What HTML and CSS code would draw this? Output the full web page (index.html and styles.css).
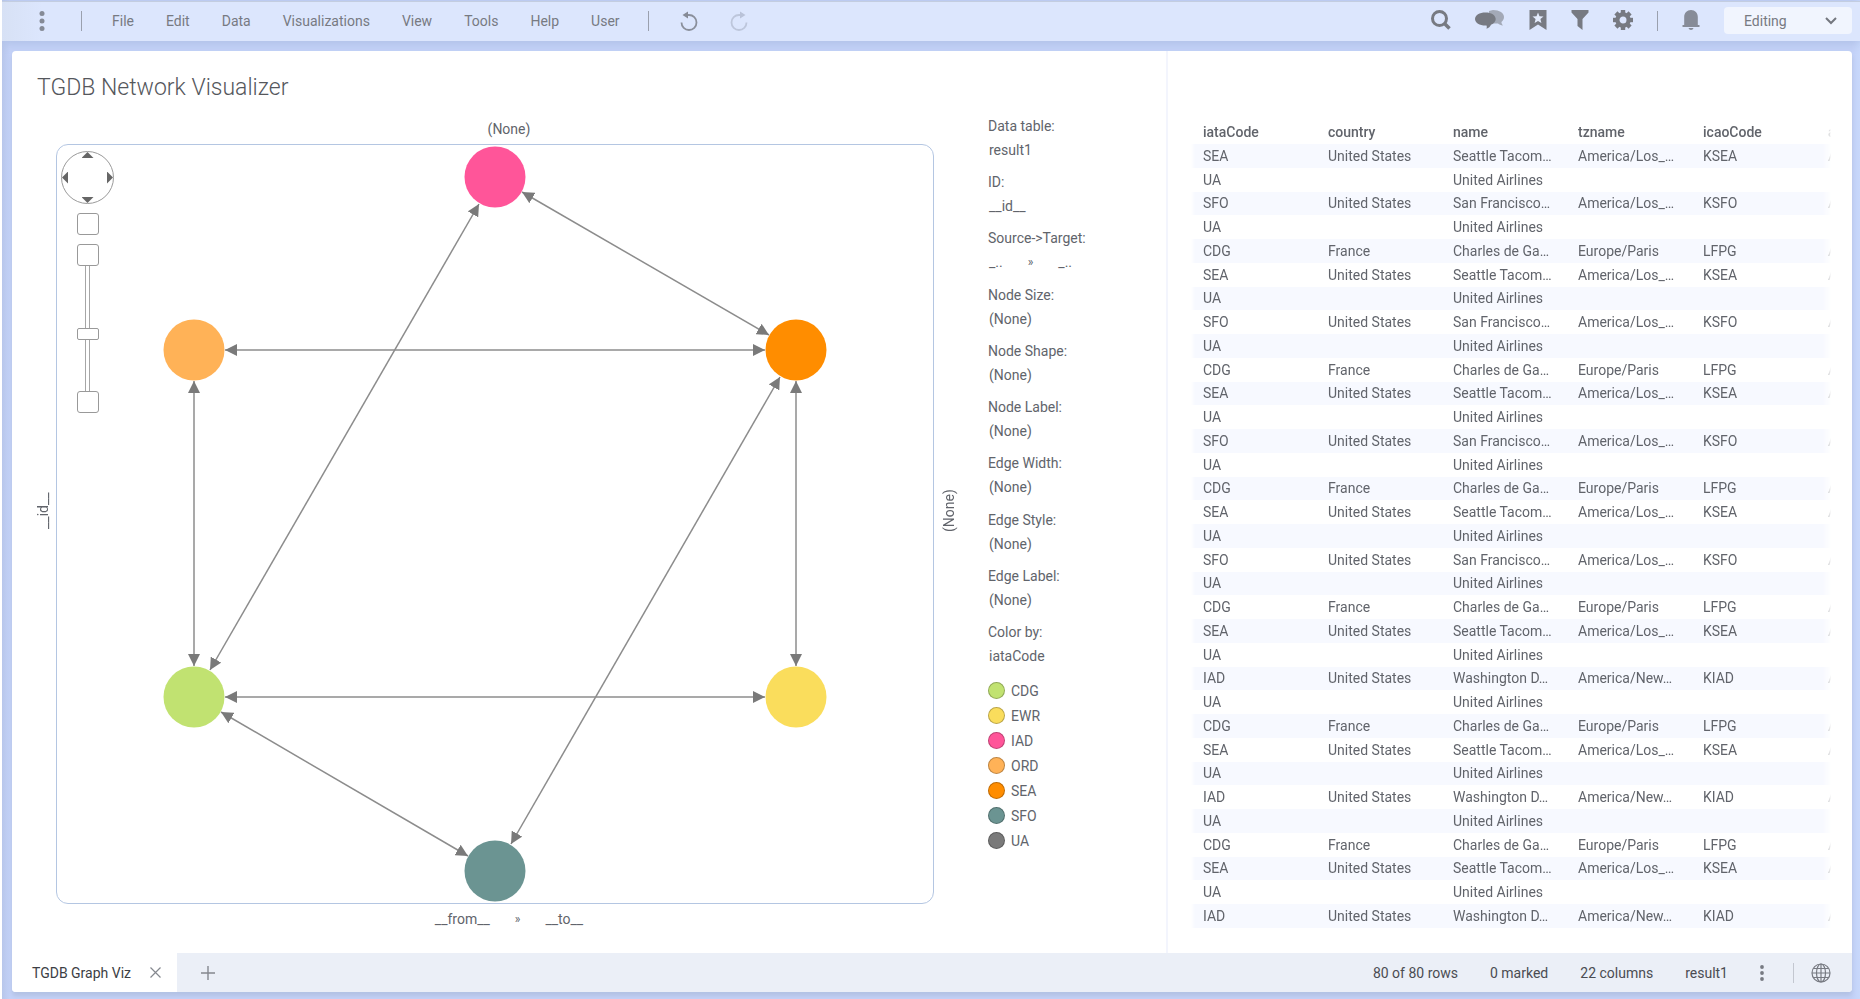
FILE: index.html
```
<!DOCTYPE html>
<html lang="en">
<head>
  <meta charset="UTF-8" />
  <meta name="viewport" content="width=device-width, initial-scale=1.0"/>
  <title>TGDB Network Visualizer</title>
  <link rel="stylesheet" href="styles.css">
</head>
<body>
  <header class="toolbar">
    <button class="icon-btn more" aria-label="More">
      <svg width="6" height="20" viewBox="0 0 6 20"><circle cx="3" cy="2.5" r="2.5"/><circle cx="3" cy="10" r="2.5"/><circle cx="3" cy="17.5" r="2.5"/></svg>
    </button>
    <span class="divider"></span>
    <nav class="menu">
      <button>File</button>
      <button>Edit</button>
      <button>Data</button>
      <button>Visualizations</button>
      <button>View</button>
      <button>Tools</button>
      <button>Help</button>
      <button>User</button>
    </nav>
    <span class="divider"></span>
    <div class="history">
      <button class="icon-btn" aria-label="Undo">
        <svg width="18" height="20" viewBox="0 0 18 20"><path d="M1.5 11.5a7.500 7.500 0 1 0 7.500-7.500H7" fill="none" stroke="#8a8f9b" stroke-width="1.8"/><path d="M2.500 4 8 .5v7z" fill="#858a96"/></svg>
      </button>
      <button class="icon-btn" aria-label="Redo" disabled>
        <svg width="18" height="20" viewBox="0 0 18 20"><path d="M16.500 11.500a7.500 7.500 0 1 1-7.500-7.500h2" fill="none" stroke="#bdc6db" stroke-width="1.8"/><path d="M15.500 4 10 .5v7z" fill="#b9c2d8"/></svg>
      </button>
    </div>

    <div class="actions">
      <button class="icon-btn" aria-label="Search">
        <svg width="20" height="20" viewBox="0 0 20 20"><circle cx="8.5" cy="8.5" r="7" fill="none" stroke="#777a82" stroke-width="3"/><path d="M13.5 13.5l5 5" stroke="#777a82" stroke-width="3.6"/></svg>
      </button>
      <button class="icon-btn" aria-label="Collaboration">
        <svg width="30" height="20" viewBox="0 0 30 20"><path d="M18 0c6.500 0 11 3 11 7 0 2-1 3.800-2.600 5 .2 1.800.8 2.600 1.600 3.400-2.200-.1-3.800-.8-5-1.900H14V1z" fill="#a3a9b7"/><path d="M10.500 2.500C4.500 2.500 0 5.200 0 9s4.500 6.500 10.500 6.500h1c.4 1.200.4 2 0 3.200 2.300-.7 3.700-2 4.500-4 3-1.200 4.700-3.200 4.700-5.700 0-3.800-4.400-6.500-10.200-6.500z" fill="#777a82"/></svg>
      </button>
      <button class="icon-btn" aria-label="Bookmarks">
        <svg width="18" height="20" viewBox="0 0 18 20"><path d="M.5 0h17v20L9 14.5.5 20z" fill="#777a82"/><path d="m9 2.500 1.500 3.800 4 .2-3.100 2.600 1 3.900L9 10.900 5.600 13l1-3.900-3.100-2.600 4-.2z" fill="#e4ecfd"/></svg>
      </button>
      <button class="icon-btn" aria-label="Filters">
        <svg width="18" height="20" viewBox="0 0 18 20"><path d="M.5 0h17v2.5L11.5 9v11L6.500 16V9L.5 2.500z" fill="#777a82"/></svg>
      </button>
      <button class="icon-btn" aria-label="Settings">
        <svg width="20" height="20" viewBox="0 0 20 20"><g id="teeth" fill="#777a82"><rect x="7.8" y="0" width="4.4" height="5"/><rect x="7.8" y="15" width="4.4" height="5"/><rect x="0" y="7.8" width="5" height="4.4"/><rect x="15" y="7.8" width="5" height="4.4"/></g><use href="#teeth" transform="rotate(45 10 10)"/><circle cx="10" cy="10" r="5.600" fill="none" stroke="#777a82" stroke-width="4.2"/></svg>
      </button>
      <span class="divider"></span>
      <button class="icon-btn" aria-label="Notifications">
        <svg width="18" height="20" viewBox="0 0 18 20"><path d="M9 0c4 0 6.800 3 6.800 7v8h1.700v2H.5v-2h1.700V7c0-4 2.800-7 6.800-7z" fill="#878c98"/><path d="M6.500 18h5c-.4 1.300-1.300 2-2.500 2s-2.100-.7-2.500-2z" fill="#878c98"/></svg>
      </button>
      <div class="mode">
        <select aria-label="Mode">
          <option>Editing</option>
        </select>
        <svg width="12" height="8" viewBox="0 0 12 8"><path d="M1 1l5 5 5-5" fill="none" stroke="#74777f" stroke-width="2"/></svg>
      </div>
    </div>
  </header>

  <main class="page">
    <div class="panels">
      <section class="network">
        <h1>TGDB Network Visualizer</h1>
        <div class="network-body">
          <div class="chart">
            <div class="axis axis-top">(None)</div>
            <div class="axis axis-left">__id__</div>
            <div class="plot">
              <svg class="graph" viewBox="0 0 876 758" role="img" aria-label="Airport network">
                <defs>
                  <marker id="arrow" viewBox="0 0 12 12" refX="12" refY="6" markerWidth="12" markerHeight="12" markerUnits="userSpaceOnUse" orient="auto-start-reverse">
                    <path d="M0 0 12 6 0 12z" fill="#7a7a7a"/>
                  </marker>
                </defs>
                <g class="edges">
                  <path d="M465 47 712 190"/>
                  <path d="M422 59 153 525"/>
                  <path d="M168 205H708"/>
                  <path d="M137 236V521"/>
                  <path d="M739 236V521"/>
                  <path d="M723 232 454 699"/>
                  <path d="M168 552H708"/>
                  <path d="M164 567 411 711"/>
                </g>
                <circle cx="438" cy="32" r="30.5" fill="#ff5599"/>
                <circle cx="137" cy="205" r="30.5" fill="#ffb257"/>
                <circle cx="739" cy="205" r="30.5" fill="#ff8d00"/>
                <circle cx="137" cy="552" r="30.5" fill="#c1e271"/>
                <circle cx="739" cy="552" r="30.5" fill="#fadd5c"/>
                <circle cx="438" cy="726" r="30.5" fill="#6b9492"/>
              </svg>
              <div class="navigator">
                <div class="pan">
                  <button class="up" aria-label="Pan up"></button>
                  <button class="left" aria-label="Pan left"></button>
                  <button class="right" aria-label="Pan right"></button>
                  <button class="down" aria-label="Pan down"></button>
                </div>
                <button class="box" aria-label="Fit to view"></button>
                <div class="zoom">
                  <button class="box" aria-label="Zoom in"></button>
                  <input type="range" min="0" max="100" value="55" aria-label="Zoom level">
                  <button class="box" aria-label="Zoom out"></button>
                </div>
              </div>
            </div>
            <div class="axis axis-right">(None)</div>
            <div class="axis axis-bottom"><span>__from__</span><small>»</small><span>__to__</span></div>
          </div>

          <aside class="legend">
            <dl>
              <div><dt>Data table:</dt><dd>result1</dd></div>
              <div><dt>ID:</dt><dd>__id__</dd></div>
              <div><dt>Source-&gt;Target:</dt><dd class="pair"><span>_..</span><small>»</small><span>_..</span></dd></div>
              <div><dt>Node Size:</dt><dd>(None)</dd></div>
              <div><dt>Node Shape:</dt><dd>(None)</dd></div>
              <div><dt>Node Label:</dt><dd>(None)</dd></div>
              <div><dt>Edge Width:</dt><dd>(None)</dd></div>
              <div><dt>Edge Style:</dt><dd>(None)</dd></div>
              <div><dt>Edge Label:</dt><dd>(None)</dd></div>
              <div><dt>Color by:</dt><dd>iataCode</dd></div>
            </dl>
            <ul>
              <li class="cdg">CDG</li>
              <li class="ewr">EWR</li>
              <li class="iad">IAD</li>
              <li class="ord">ORD</li>
              <li class="sea">SEA</li>
              <li class="sfo">SFO</li>
              <li class="ua">UA</li>
            </ul>
          </aside>
        </div>
      </section>

      <section class="data">
        <table>
          <thead>
            <tr><th>iataCode</th><th>country</th><th>name</th><th>tzname</th><th>icaoCode</th><th>a</th></tr>
          </thead>
          <tbody id="rows"></tbody>
        </table>
      </section>
    </div>

    <footer class="statusbar">
      <div class="tab">
        <a href="#">TGDB Graph Viz</a>
        <button class="icon-btn" aria-label="Close page">
          <svg width="11" height="11" viewBox="0 0 11 11"><path d="M.5.5l10 10M10.5.5l-10 10" stroke="#85888f" stroke-width="1.2"/></svg>
        </button>
      </div>
      <button class="icon-btn add" aria-label="New page">
        <svg width="14" height="14" viewBox="0 0 14 14"><path d="M7 0v14M0 7h14" stroke="#85888f" stroke-width="1.4"/></svg>
      </button>
      <div class="status">
        <span>80 of 80 rows</span>
        <span>0 marked</span>
        <span>22 columns</span>
        <span>result1</span>
        <button class="icon-btn" aria-label="Table options">
          <svg width="4" height="16" viewBox="0 0 4 16"><g fill="#777a82"><circle cx="2" cy="2" r="1.9"/><circle cx="2" cy="8" r="1.9"/><circle cx="2" cy="14" r="1.9"/></g></svg>
        </button>
        <span class="divider"></span>
        <button class="icon-btn" aria-label="Language">
          <svg width="20" height="20" viewBox="0 0 20 20"><g fill="none" stroke="#777a82" stroke-width="1.2"><circle cx="10" cy="10" r="9"/><ellipse cx="10" cy="10" rx="4.5" ry="9"/><path d="M10 1v18M1 10h18M2.500 5.500h15M2.500 14.500h15"/></g></svg>
        </button>
      </div>
    </footer>
  </main>

  <script>
    const airports = {
      SEA: ["SEA", "United States", "Seattle Tacom…", "America/Los_…", "KSEA", "A"],
      SFO: ["SFO", "United States", "San Francisco…", "America/Los_…", "KSFO", "A"],
      IAD: ["IAD", "United States", "Washington D…", "America/New…", "KIAD", "A"],
      CDG: ["CDG", "France", "Charles de Ga…", "Europe/Paris", "LFPG", "A"],
      UA: ["UA", "", "United Airlines", "", "", ""]
    };

    const viaSfo = ["SEA", "UA", "SFO", "UA", "CDG"];
    const viaIad = ["SEA", "UA", "IAD", "UA", "CDG"];
    const order = [
      ...viaSfo, ...viaSfo, ...viaSfo, ...viaSfo,
      ...viaIad, ...viaIad, ...viaIad.slice(0, 3)
    ];

    const tbody = document.getElementById("rows");
    order.forEach(code => {
      const row = tbody.insertRow();
      airports[code].forEach(value => {
        row.insertCell().textContent = value;
      });
    });
  </script>
</body>
</html>
```

FILE: styles.css
```
* {
  box-sizing: border-box;
}

body {
  margin: 0;
  min-height: 100vh;
  display: flex;
  flex-direction: column;
  padding-top: 1px;
  border-left: 2px solid #fff;
  background: linear-gradient(90deg, #b5c4e8, #c3d1f7 10px, #c3d1f7 calc(100% - 8px), #c8d8fb);
  font-family: Roboto, sans-serif;
  font-size: 14px;
  color: #61646b;
}

button {
  font: inherit;
  color: inherit;
  background: none;
  border: 0;
  padding: 0;
  cursor: pointer;
}

svg {
  display: block;
}

.toolbar {
  height: 40px;
  display: flex;
  align-items: center;
  padding: 0 8px 2px 37px;
  background: linear-gradient(90deg, #d7e1f5, #dce6fd 40px);
  border-top: 1px solid #c3cde0;
  box-shadow: 0 2px 10px #aebfe5;
  color: #777a82;
}

.more {
  fill: #858a96;
}

.divider {
  width: 1px;
  height: 20px;
  background: #9aa0ae;
}

.more + .divider {
  margin: 0 30px 0 36px;
}

.menu {
  display: flex;
  gap: 32px;
  margin-right: 28px;
}

.history {
  display: flex;
  gap: 32px;
  margin-left: 31px;
}

.actions {
  display: flex;
  align-items: center;
  gap: 24px;
  margin-left: auto;
}

.actions .icon-btn {
  padding-bottom: 2px;
}

.mode {
  position: relative;
}

.mode select {
  appearance: none;
  width: 128px;
  height: 27px;
  padding: 0 20px;
  border: 0;
  border-radius: 4px;
  background: #f1f5fe;
  font: inherit;
  color: inherit;
}

.mode svg {
  position: absolute;
  right: 15px;
  top: 10px;
  pointer-events: none;
}

.page {
  flex: 1;
  display: flex;
  flex-direction: column;
  margin: 10px 8px 7px 10px;
  border-radius: 4px;
  background: #fff;
  box-shadow: 0 4px 4px #b3c2e4;
  overflow: hidden;
}

.panels {
  flex: 1;
  display: flex;
}

.network {
  flex: 1;
  display: flex;
  flex-direction: column;
  padding: 22px 46px 20px 25px;
  border-right: 2px solid #f3f5fd;
}

h1 {
  margin: 0;
  font-size: 23px;
  font-weight: 300;
  line-height: 30px;
  color: #55575c;
}

.network-body {
  flex: 1;
  display: flex;
  gap: 31px;
  padding-top: 11px;
}

.chart {
  flex: 1;
  display: grid;
  grid-template:
    ". top ." 30px
    "left plot right" 1fr
    ". bottom ." 29px / 19px 1fr 23px;
}

.axis {
  display: flex;
  align-items: center;
  justify-content: center;
}

.axis-top,
.axis-bottom {
  padding-left: 28px;
}

.axis-top {
  grid-area: top;
}

.axis-bottom {
  grid-area: bottom;
  gap: 25px;
}

small {
  font-size: 12px;
}

.axis-left,
.axis-right {
  writing-mode: vertical-rl;
  transform: rotate(180deg);
  padding-top: 26px;
}

.axis-left {
  grid-area: left;
  justify-self: start;
  line-height: 12px;
}

.axis-right {
  grid-area: right;
  justify-self: end;
}

.plot {
  grid-area: plot;
  position: relative;
  border: 1px solid #b4c6e2;
  border-radius: 12px;
}

.graph {
  width: 100%;
  height: 100%;
}

.edges path {
  fill: none;
  stroke: #8c8c8c;
  stroke-width: 1.5;
  marker-start: url(#arrow);
  marker-end: url(#arrow);
}

.navigator {
  position: absolute;
  left: 4px;
  top: 6px;
  display: flex;
  flex-direction: column;
  align-items: center;
  gap: 9px;
}

.pan {
  display: grid;
  grid-template-columns: repeat(3, 1fr);
  grid-template-rows: repeat(3, 1fr);
  width: 53px;
  height: 53px;
  border: 1px solid #9a9a9a;
  border-radius: 50%;
}

.pan button {
  width: 12px;
  height: 6px;
  background: #666;
  clip-path: polygon(50% 0, 100% 100%, 0 100%);
}

.pan .up {
  grid-area: 1 / 2;
  justify-self: center;
}

.pan .down {
  grid-area: 3 / 2;
  place-self: end center;
  clip-path: polygon(0 0, 100% 0, 50% 100%);
}

.pan .left,
.pan .right {
  width: 6px;
  height: 12px;
  align-self: center;
}

.pan .left {
  grid-area: 2 / 1;
  clip-path: polygon(0 50%, 100% 0, 100% 100%);
}

.pan .right {
  grid-area: 2 / 3;
  justify-self: end;
  clip-path: polygon(0 0, 100% 50%, 0 100%);
}

.box {
  width: 22px;
  height: 22px;
  border: 1px solid #999;
  border-radius: 3px;
  background: #fff;
}

.zoom {
  display: flex;
  flex-direction: column;
  align-items: center;
}

.zoom input {
  appearance: none;
  writing-mode: vertical-lr;
  width: 22px;
  height: 125px;
  margin: 0;
  background: linear-gradient(#a6a6a6, #a6a6a6) 8px 0 / 1px 100% no-repeat,
    linear-gradient(#a6a6a6, #a6a6a6) 12px 0 / 1px 100% no-repeat;
}

.zoom input::-webkit-slider-thumb {
  appearance: none;
  width: 22px;
  height: 12px;
  border: 1px solid #999;
  border-radius: 2px;
  background: #fff;
}

.legend {
  width: 132px;
}

.legend dl {
  display: flex;
  flex-direction: column;
  justify-content: space-between;
  min-height: 554px;
  margin: 0 0 10px;
  line-height: 24px;
}

.legend dd {
  margin: 0 0 0 1px;
}

.pair {
  display: flex;
  gap: 25px;
}

.legend ul {
  margin: 0;
  padding: 0;
  list-style: none;
}

.legend li {
  display: flex;
  align-items: center;
  gap: 6px;
  height: 25px;
}

.legend li::before {
  content: "";
  width: 15px;
  height: 15px;
  border: 1px solid rgba(0, 0, 0, 0.25);
  border-radius: 50%;
  background: var(--dot);
}

.cdg { --dot: #c1e271; }
.ewr { --dot: #fadd5c; }
.iad { --dot: #ff5599; }
.ord { --dot: #ffb257; }
.sea { --dot: #ff8d00; }
.sfo { --dot: #6b9492; }
.ua { --dot: #7a7a7a; }

.data {
  width: 684px;
  padding: 68px 21px 25px 23px;
}

table {
  table-layout: fixed;
  width: 100%;
  height: 100%;
  border-collapse: collapse;
  -webkit-mask-image: linear-gradient(90deg, transparent, #000 4px, #000 calc(100% - 8px), transparent);
  mask-image: linear-gradient(90deg, transparent, #000 4px, #000 calc(100% - 8px), transparent);
}

th,
td {
  height: 23px;
  padding: 0 0 0 12px;
  line-height: 20px;
  text-align: left;
  white-space: nowrap;
  overflow: hidden;
}

th {
  width: 125px;
  height: 25px;
  font-weight: 500;
}

th:last-child {
  width: auto;
}

tbody tr:nth-child(odd) {
  background: #f7f9ff;
}

.statusbar {
  height: 39px;
  display: flex;
  align-items: center;
  background: #ebeff7;
  color: #4a4c52;
}

.tab {
  align-self: stretch;
  display: flex;
  align-items: center;
  gap: 19px;
  padding: 0 16px 0 20px;
  background: #fff;
}

.tab a {
  color: #3c3e44;
  text-decoration: none;
}

.add {
  margin-left: 24px;
}

.status {
  display: flex;
  align-items: center;
  gap: 32px;
  margin-left: auto;
  padding-right: 21px;
}

.status .divider {
  margin: 0 -15px 0 -3px;
  background: #c3c7d0;
}
```
